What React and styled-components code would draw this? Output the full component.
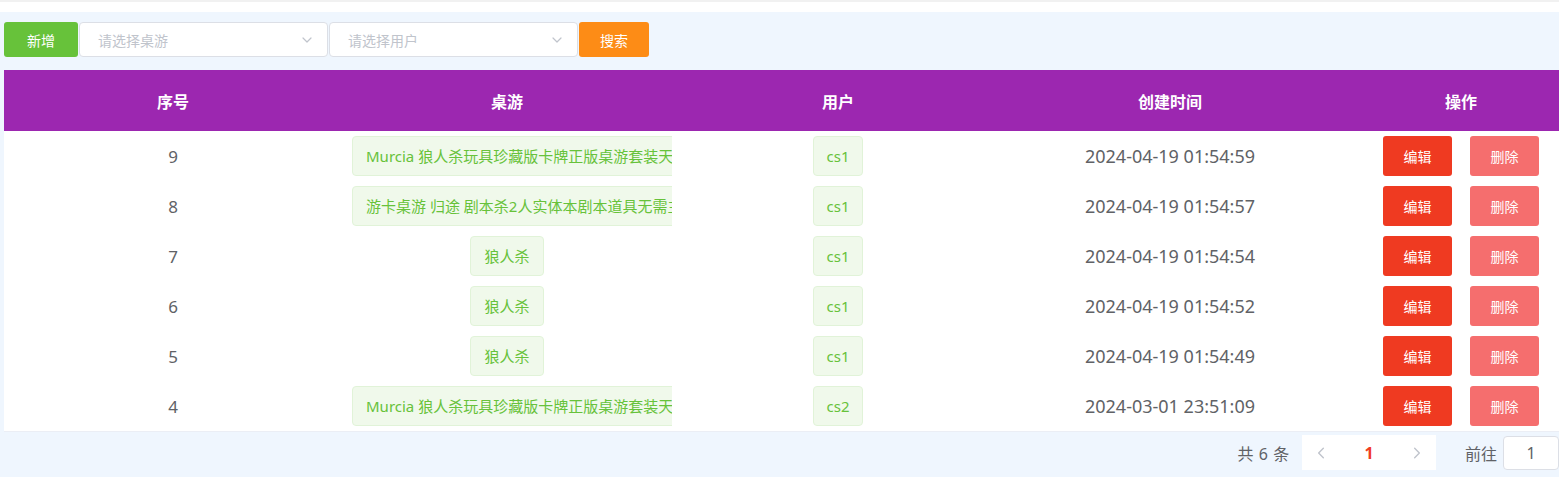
import React from 'react'
import styled, { createGlobalStyle } from 'styled-components'

const GlobalStyle = createGlobalStyle`
  html, body {
    margin: 0;
    padding: 0;
    background: #eff6fe;
    font-family: "Noto Sans", "Noto Sans CJK SC", sans-serif;
    overflow: hidden;
  }
`

const TopBand = styled.div`
  height: 10px;
  background: #fff;
  border-top: 2px solid #f1f1f1;
`

const Content = styled.div`
  padding: 10px 0 0 4px;
  overflow: hidden;
`

const Toolbar = styled.div`
  display: flex;
  align-items: center;
  height: 35px;
  gap: 1px;
`

const FlatButton = styled.button`
  height: 35px;
  width: ${p => p.$width}px;
  border: none;
  border-radius: 3px;
  background: ${p => p.$bg};
  color: #fff;
  font-family: inherit;
  font-size: 14px;
  padding: 0;
  cursor: pointer;
`

const SelectBox = styled.div`
  box-sizing: border-box;
  width: 249px;
  height: 35px;
  border: 1px solid #dcdfe6;
  border-radius: 4px;
  background: #fff;
  display: flex;
  align-items: center;
  justify-content: space-between;
  padding: 0 14px 0 18px;
  color: #c0c4cc;
  font-size: 14px;
`

const TableWrap = styled.div`
  margin-top: 13px;
  width: 1582px;
`

const Row = styled.div`
  display: grid;
  grid-template-columns: 338px 330px 332px 332px 250px;
  align-items: center;
  height: ${p => (p.$head ? 61 : 50)}px;
  background: ${p => (p.$head ? '#9c27b0' : '#fff')};
  color: ${p => (p.$head ? '#fff' : '#606266')};
  font-weight: ${p => (p.$head ? 700 : 400)};
  font-size: ${p => (p.$head ? 16 : 17)}px;
  border-bottom: ${p => (p.$last ? '1px solid #ebeef5' : 'none')};
`

const Cell = styled.div`
  padding: 0 10px;
  text-align: center;
  white-space: nowrap;
  overflow: hidden;
`

const Tag = styled.span`
  display: inline-block;
  box-sizing: border-box;
  height: 40px;
  line-height: 38px;
  padding: 0 13px;
  background: #f0f9eb;
  border: 1px solid #e1f3d8;
  border-radius: 4px;
  color: #67c23a;
  font-size: 15px;
  vertical-align: middle;
`

const TimeText = styled.span`
  font-size: 18px;
  color: #606266;
`

const Actions = styled.div`
  display: flex;
  justify-content: center;
  gap: 18px;
`

const ActionButton = styled.button`
  width: 69px;
  height: 40px;
  border: none;
  border-radius: 3px;
  background: ${p => p.$bg};
  color: #fff;
  font-family: inherit;
  font-size: 14px;
  padding: 0;
`

const PagerBar = styled.div`
  display: flex;
  justify-content: flex-end;
  align-items: center;
  width: 1555px;
  margin-top: 3px;
  color: #606266;
  font-size: 16px;
`

const Total = styled.span`
  margin-right: 12px;
  letter-spacing: 0.6px;
`

const Pager = styled.div`
  display: flex;
  align-items: center;
  justify-content: space-between;
  width: 134px;
  height: 35px;
  background: #fff;
  padding: 0 12px;
  box-sizing: border-box;
  color: #c0c4cc;
`

const PageNum = styled.span`
  color: #f03c24;
  font-weight: 700;
  font-size: 16px;
`

const Jump = styled.span`
  margin-left: 29px;
  margin-right: 6px;
`

const JumpInput = styled.div`
  box-sizing: border-box;
  width: 56px;
  height: 34px;
  border: 1px solid #dcdfe6;
  border-radius: 4px;
  background: #fff;
  display: flex;
  align-items: center;
  justify-content: center;
  font-size: 16px;
`

const Chevron = ({ dir = 'down', size = 12 }) => {
  const d = {
    down: 'M2 4 L6 8 L10 4',
    left: 'M8 2 L4 6 L8 10',
    right: 'M4 2 L8 6 L4 10'
  }[dir]
  return (
    <svg width={size} height={size} viewBox="0 0 12 12" fill="none">
      <path d={d} stroke="#c0c4cc" strokeWidth="1.2" strokeLinecap="round" strokeLinejoin="round" />
    </svg>
  )
}

const rows = [
  { id: 9, game: 'Murcia 狼人杀玩具珍藏版卡牌正版桌游套装天黑请闭眼', user: 'cs1', time: '2024-04-19 01:54:59' },
  { id: 8, game: '游卡桌游 归途 剧本杀2人实体本剧本道具无需主持', user: 'cs1', time: '2024-04-19 01:54:57' },
  { id: 7, game: '狼人杀', user: 'cs1', time: '2024-04-19 01:54:54' },
  { id: 6, game: '狼人杀', user: 'cs1', time: '2024-04-19 01:54:52' },
  { id: 5, game: '狼人杀', user: 'cs1', time: '2024-04-19 01:54:49' },
  { id: 4, game: 'Murcia 狼人杀玩具珍藏版卡牌正版桌游套装天黑请闭眼', user: 'cs2', time: '2024-03-01 23:51:09' }
]

export default function App() {
  return (
    <>
      <GlobalStyle />
      <TopBand />
      <Content>
        <Toolbar>
          <FlatButton $bg="#67c23a" $width={74}>新增</FlatButton>
          <SelectBox>
            请选择桌游
            <Chevron />
          </SelectBox>
          <SelectBox>
            请选择用户
            <Chevron />
          </SelectBox>
          <FlatButton $bg="#fd8c16" $width={70}>搜索</FlatButton>
        </Toolbar>

        <TableWrap>
          <Row $head>
            <Cell>序号</Cell>
            <Cell>桌游</Cell>
            <Cell>用户</Cell>
            <Cell>创建时间</Cell>
            <Cell>操作</Cell>
          </Row>
          {rows.map((r, i) => (
            <Row key={r.id} $last={i === rows.length - 1}>
              <Cell>{r.id}</Cell>
              <Cell>
                <Tag>{r.game}</Tag>
              </Cell>
              <Cell>
                <Tag>{r.user}</Tag>
              </Cell>
              <Cell>
                <TimeText>{r.time}</TimeText>
              </Cell>
              <Cell>
                <Actions>
                  <ActionButton $bg="#ef3a21">编辑</ActionButton>
                  <ActionButton $bg="#f56e6e">删除</ActionButton>
                </Actions>
              </Cell>
            </Row>
          ))}
        </TableWrap>

        <PagerBar>
          <Total>共 6 条</Total>
          <Pager>
            <Chevron dir="left" size={14} />
            <PageNum>1</PageNum>
            <Chevron dir="right" size={14} />
          </Pager>
          <Jump>前往</Jump>
          <JumpInput>1</JumpInput>
        </PagerBar>
      </Content>
    </>
  )
}
